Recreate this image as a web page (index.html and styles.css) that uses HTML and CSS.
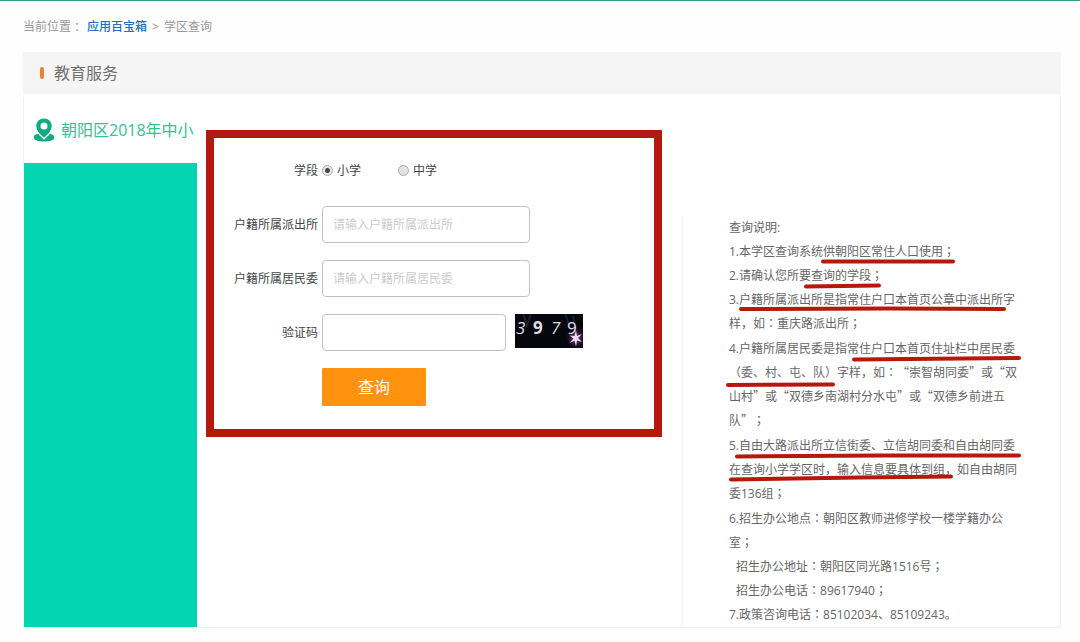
FILE: index.html
```html
<!DOCTYPE html>
<html lang="zh-CN">
<head>
<meta charset="utf-8">
<title>学区查询</title>
<link rel="stylesheet" href="styles.css">
</head>
<body>
<nav class="crumbs">当前位置<span class="mid" lang="zh-TW">：</span><a href="#">应用百宝箱</a><span class="sep">&gt;</span><span>学区查询</span></nav>
<main class="panel">
  <header class="panel-head"><h1>教育服务</h1></header>
  <div class="panel-body">
    <aside class="side">
      <h2 class="side-title">
        <svg class="pin" viewBox="0 0 22 24" aria-hidden="true">
          <path d="M4.500 15.800C2 16.600.6 18 .6 19.500c0 2.400 4.600 4.100 10.400 4.100s10.400-1.700 10.400-4.100c0-1.500-1.400-2.900-3.900-3.700z"/>
          <path class="pin-gap" d="M11 .5c-4.300 0-7.700 3.200-7.700 7.300 0 4.900 3.500 8.500 7.700 11.900 4.200-3.400 7.700-7 7.700-11.900C18.700 3.700 15.300.5 11 .5z"/>
          <path fill-rule="evenodd" d="M11 .5c-4.300 0-7.700 3.200-7.700 7.300 0 4.900 3.500 8.500 7.700 11.900 4.200-3.400 7.700-7 7.700-11.900C18.700 3.700 15.300.5 11 .5zm0 3.900a3.500 3.500 0 1 1 0 7 3.500 3.500 0 0 1 0-7z"/>
        </svg>
        朝阳区2018年中小
      </h2>
      <div class="side-fill"></div>
    </aside>
    <form class="query">
      <div class="row" role="radiogroup" aria-labelledby="stage">
        <span class="label" id="stage">学段</span>
        <label class="choice"><input type="radio" name="stage" checked>小学</label>
        <label class="choice"><input type="radio" name="stage">中学</label>
      </div>
      <div class="row">
        <label class="label" for="station">户籍所属派出所</label>
        <input class="field" id="station" type="text" placeholder="请输入户籍所属派出所">
      </div>
      <div class="row">
        <label class="label" for="committee">户籍所属居民委</label>
        <input class="field" id="committee" type="text" placeholder="请输入户籍所属居民委">
      </div>
      <div class="row">
        <label class="label" for="code">验证码</label>
        <input class="field field-code" id="code" type="text">
        <svg class="captcha" viewBox="0 0 68 34" role="img" aria-label="验证码图片">
          <defs>
            <radialGradient id="glow"><stop offset="0" stop-color="#b070c8" stop-opacity=".8"/><stop offset="1" stop-color="#301040" stop-opacity="0"/></radialGradient>
          </defs>
          <rect width="68" height="34" fill="#06060d"/>
          <path d="M8 0l5 12M16 0l-5 14M50 0l6 16M58 2l3 14" stroke="#182034" stroke-width="2"/>
          <circle cx="61" cy="24" r="11" fill="url(#glow)"/>
          <g class="digits">
            <text x="1" y="20" font-style="italic">3</text>
            <text x="18" y="20" font-weight="700">9</text>
            <text x="36" y="20" font-style="italic">7</text>
            <text x="52" y="20">9</text>
          </g>
          <path d="M61 16l1 6 5-2-4 4 4 4-5-1.500-1 6-1.400-5.700-5.100 2.200 4-4.500-4-3 5 .5z" fill="#f0d8f8"/>
        </svg>
      </div>
      <div class="row row-submit"><button class="submit" type="submit">查询</button></div>
    </form>
    <section class="notes">
      <div class="notes-text">
        <p>查询说明:</p>
        <p>1.本学区查询系统供朝阳区常住人口使用<span class="mid" lang="zh-TW">；</span></p>
        <p>2.请确认您所要查询的学段<span class="mid" lang="zh-TW">；</span></p>
        <p class="long">3.户籍所属派出所是指常住户口本首页公章中派出所字样，如<span class="mid" lang="zh-TW">：</span>重庆路派出所<span class="mid" lang="zh-TW">；</span></p>
        <p class="long">4.户籍所属居民委是指常住户口本首页住址栏中居民委（委、村、屯、队）字样，如<span class="mid" lang="zh-TW">：</span><span class="quoted">“崇智胡同委”或“双山村”或“双德乡南湖村分水屯”或“双德乡前进五队”</span><span class="mid" lang="zh-TW">；</span></p>
        <p class="long">5.自由大路派出所立信街委、立信胡同委和自由胡同委在查询小学学区时，输入信息要具体到组，如自由胡同委136组<span class="mid" lang="zh-TW">；</span></p>
        <p>6.招生办公地点<span class="mid" lang="zh-TW">：</span>朝阳区教师进修学校一楼学籍办公室<span class="mid" lang="zh-TW">；</span></p>
        <p class="inset">招生办公地址<span class="mid" lang="zh-TW">：</span>朝阳区同光路1516号<span class="mid" lang="zh-TW">；</span></p>
        <p class="inset">招生办公电话<span class="mid" lang="zh-TW">：</span>89617940<span class="mid" lang="zh-TW">；</span></p>
        <p>7.政策咨询电话<span class="mid" lang="zh-TW">：</span>85102034、85109243。</p>
        <svg class="marks" viewBox="0 0 300 412" aria-hidden="true">
          <path d="M94 45.500L224 45.500M77 70.500L150 69.500M12 93L160 92.500 275 93M125 143.500L290 142M-1 169L104 168.500M8 240.500L150 239.500 290 239.500M2 263.500L130 261.500 222 260.500"/>
        </svg>
      </div>
    </section>
  </div>
</main>
</body>
</html>
```
FILE: styles.css
```css
* { box-sizing: border-box; }

body {
  margin: 0;
  padding: 0 19px 14px 23px;
  border-top: 1px solid #3f968c;
  background: #fefefe;
  color: #444;
  font: 12px/24px "Open Sans", "Noto Sans CJK SC", sans-serif;
  text-spacing-trim: space-all;
}

h1, h2, p { margin: 0; font-weight: 400; }

.mid {
  font-family: "Noto Sans CJK TC", sans-serif;
  line-height: 1;
}
.quoted {
  font-family: "Noto Sans CJK SC", sans-serif;
  line-height: 1;
}

.crumbs {
  display: flex;
  align-items: center;
  height: 51px;
  color: #999;
}
.crumbs a {
  margin-left: 4px;
  color: #2470bd;
  font-weight: 500;
  text-decoration: none;
}
.sep { margin: 0 5px; }

.panel-head {
  display: flex;
  align-items: center;
  gap: 10px;
  height: 42px;
  padding-left: 17px;
  background: #f5f5f5;
}
.panel-head::before {
  content: "";
  width: 4px;
  height: 12px;
  border-radius: 2px;
  background: #f08036;
}
.panel-head h1 {
  color: #707070;
  font-size: 16px;
}

.panel-body {
  display: flex;
  margin-top: 3px;
  border: 1px solid #f0f0f2;
  border-top: 0;
  background: #fff;
}

.side {
  display: flex;
  flex-direction: column;
  flex: 0 0 173px;
}
.side-title {
  display: flex;
  align-items: center;
  gap: 6px;
  height: 66px;
  padding-left: 9px;
  color: #2fc493;
  font-size: 16px;
  white-space: nowrap;
}
.pin {
  flex: none;
  width: 22px;
  height: 24px;
  fill: #10ab80;
}
.pin-gap {
  fill: #fff;
  stroke: #fff;
  stroke-width: 3;
}
.side-fill {
  flex: 1;
  background: #03d5b2;
}

.query {
  display: flex;
  flex-direction: column;
  gap: 17px;
  align-self: flex-start;
  flex: 0 1 456px;
  margin: 33px 20px 0 9px;
  padding: 14px 0 23px;
  border: 8px solid #b5180c;
  background: #fff;
}
.row {
  display: flex;
  align-items: center;
  min-height: 37px;
}
.label {
  flex: 0 0 104px;
  margin-right: 4px;
  text-align: right;
}
.choice {
  display: flex;
  align-items: center;
  gap: 4px;
  margin-right: 37px;
}
.choice input {
  appearance: none;
  width: 11px;
  height: 11px;
  margin: 0;
  border: 1px solid #aaa;
  border-radius: 50%;
  background: #e2e2e2;
}
.choice input:checked {
  background: radial-gradient(circle, #444 0 2px, #e8e8e8 3px);
}
.field {
  width: 208px;
  height: 37px;
  padding: 0 10px;
  border: 1px solid #c4c0c2;
  border-radius: 4px;
  background: #fff;
  color: #444;
  font: inherit;
}
.field::placeholder { color: #ccc; }
.field-code { width: 184px; }
.captcha {
  align-self: flex-start;
  width: 68px;
  height: 34px;
  margin-left: 9px;
}
.digits {
  fill: #dedee6;
  font: 17px "Open Sans", sans-serif;
}
.row-submit { padding-left: 108px; }
.submit {
  width: 104px;
  height: 38px;
  padding: 0;
  border: 0;
  border-radius: 1px;
  background: #ff920f;
  color: #fff;
  font: inherit;
  font-size: 16px;
}

.notes {
  flex: 1;
  margin-top: 119px;
  padding: 0 39px 0 46px;
  border-left: 1px solid #f0f0f2;
  color: #666;
}
.notes-text { position: relative; }
.long { margin-bottom: 1px; }
.inset { padding-left: 7px; }
.marks {
  position: absolute;
  top: 0;
  left: 0;
  width: 300px;
  height: 412px;
  overflow: visible;
  fill: none;
  stroke: #b5180c;
  stroke-width: 4;
  stroke-linecap: round;
  pointer-events: none;
}
```
